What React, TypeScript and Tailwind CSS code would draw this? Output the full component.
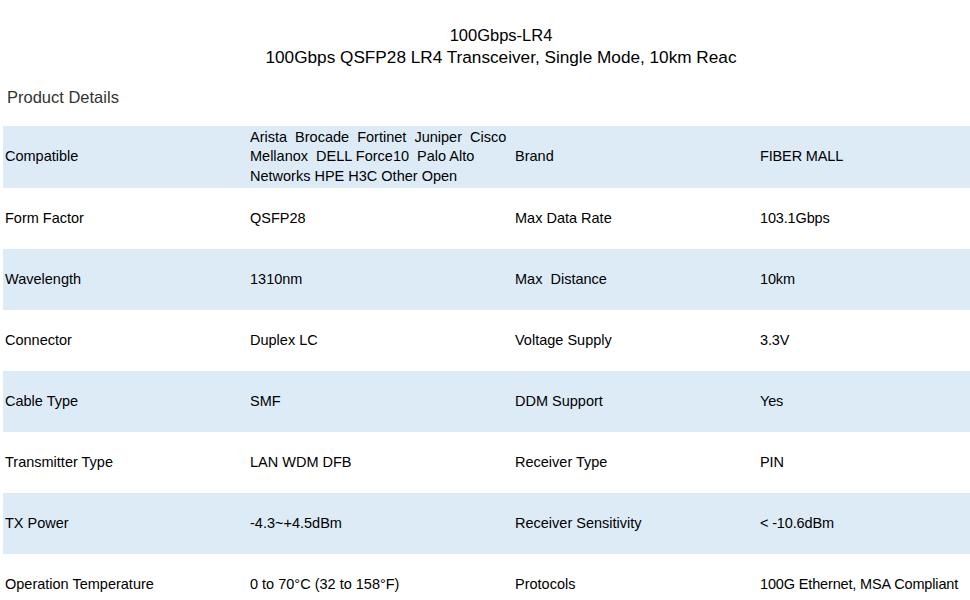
import React from "react";

const rows: [string, string, string, string][] = [
  ["Compatible", "Arista  Brocade  Fortinet  Juniper  Cisco\nMellanox  DELL Force10  Palo Alto\nNetworks HPE H3C Other Open", "Brand", "FIBER MALL"],
  ["Form Factor", "QSFP28", "Max Data Rate", "103.1Gbps"],
  ["Wavelength", "1310nm", "Max  Distance", "10km"],
  ["Connector", "Duplex LC", "Voltage Supply", "3.3V"],
  ["Cable Type", "SMF", "DDM Support", "Yes"],
  ["Transmitter Type", "LAN WDM DFB", "Receiver Type", "PIN"],
  ["TX Power", "-4.3~+4.5dBm", "Receiver Sensitivity", "< -10.6dBm"],
  ["Operation Temperature", "0 to 70°C (32 to 158°F)", "Protocols", "100G Ethernet, MSA Compliant"],
];

export default function App() {
  return (
    <div
      className="w-[970px] h-[600px] overflow-hidden bg-white text-black"
      style={{ fontFamily: '"Liberation Sans", Arial, sans-serif' }}
    >
      <div className="pt-[24px] pl-[32px] text-center leading-[22px]">
        <div className="text-[16.5px]">100Gbps-LR4</div>
        <div className="text-[17.2px]">100Gbps QSFP28 LR4 Transceiver, Single Mode, 10km Reac</div>
      </div>
      <div className="mt-[18px] pl-[7px] text-[16.5px] leading-[22px] text-[#333]">Product Details</div>
      <div className="mt-[18px] ml-[3px] w-[967px] text-[14.5px]">
        {rows.map((r, i) => (
          <div
            key={i}
            className={`grid grid-cols-[245px_265px_245px_212px] items-center ${i === 0 ? "h-[62px]" : "h-[61px]"} ${i % 2 === 0 ? "bg-[#ddebf7]" : "bg-white"}`}
          >
            <div className="pl-[2px]">{r[0]}</div>
            <div className="pl-[2px] leading-[19.5px] whitespace-pre">{r[1]}</div>
            <div className="pl-[2px] whitespace-pre">{r[2]}</div>
            <div className="pl-[2px] whitespace-nowrap tracking-[-0.15px]">{r[3]}</div>
          </div>
        ))}
      </div>
    </div>
  );
}
